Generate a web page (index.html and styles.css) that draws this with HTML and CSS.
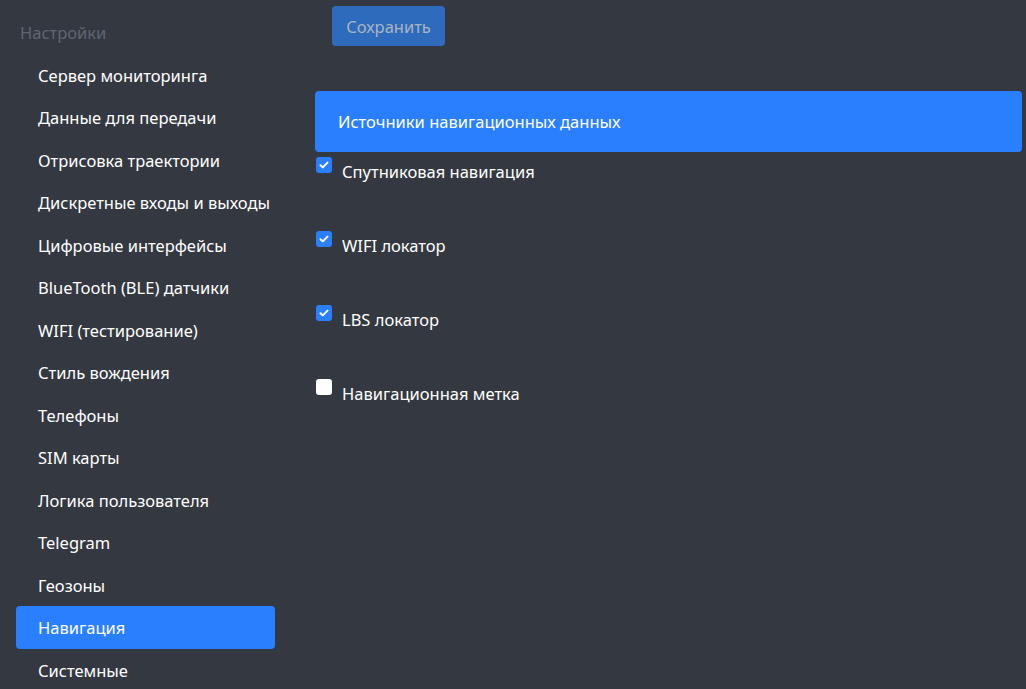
FILE: index.html
```html
<!DOCTYPE html>
<html lang="ru">
<head>
<meta charset="utf-8">
<title>Настройки</title>
<link rel="stylesheet" href="styles.css">
</head>
<body>
<div class="layout">
  <aside class="sidebar">
    <div class="sidebar-title">Настройки</div>
    <nav class="nav">
      <a class="nav-link">Сервер мониторинга</a>
      <a class="nav-link">Данные для передачи</a>
      <a class="nav-link">Отрисовка траектории</a>
      <a class="nav-link">Дискретные входы и выходы</a>
      <a class="nav-link">Цифровые интерфейсы</a>
      <a class="nav-link">BlueTooth (BLE) датчики</a>
      <a class="nav-link">WIFI (тестирование)</a>
      <a class="nav-link">Стиль вождения</a>
      <a class="nav-link">Телефоны</a>
      <a class="nav-link">SIM карты</a>
      <a class="nav-link">Логика пользователя</a>
      <a class="nav-link">Telegram</a>
      <a class="nav-link">Геозоны</a>
      <a class="nav-link active">Навигация</a>
      <a class="nav-link">Системные</a>
    </nav>
  </aside>
  <main class="main">
    <button class="btn-save" disabled>Сохранить</button>
    <div class="card-header">Источники навигационных данных</div>
    <div class="check-row">
      <span class="check checked"><svg viewBox="0 0 16 16" width="16" height="16"><path d="M4.5 8.2l2.3 2.2 4.7-4.8" fill="none" stroke="#fff" stroke-width="2" stroke-linecap="round" stroke-linejoin="round"/></svg></span>
      <span class="check-label">Спутниковая навигация</span>
    </div>
    <div class="check-row">
      <span class="check checked"><svg viewBox="0 0 16 16" width="16" height="16"><path d="M4.5 8.2l2.3 2.2 4.7-4.8" fill="none" stroke="#fff" stroke-width="2" stroke-linecap="round" stroke-linejoin="round"/></svg></span>
      <span class="check-label">WIFI локатор</span>
    </div>
    <div class="check-row">
      <span class="check checked"><svg viewBox="0 0 16 16" width="16" height="16"><path d="M4.5 8.2l2.3 2.2 4.7-4.8" fill="none" stroke="#fff" stroke-width="2" stroke-linecap="round" stroke-linejoin="round"/></svg></span>
      <span class="check-label">LBS локатор</span>
    </div>
    <div class="check-row">
      <span class="check"></span>
      <span class="check-label">Навигационная метка</span>
    </div>
  </main>
</div>
</body>
</html>
```

FILE: styles.css
```css
html, body {
  margin: 0;
  padding: 0;
  height: 100%;
  background: #343840;
}
body {
  font-family: "Noto Sans", "Open Sans", sans-serif;
  font-size: 16.5px;
  color: #ffffff;
  overflow: hidden;
}
.layout {
  display: flex;
  height: 689px;
}
.sidebar {
  width: 315px;
  flex: none;
  padding-top: 20px;
  box-sizing: border-box;
}
.sidebar-title {
  padding-left: 20px;
  line-height: 26px;
  height: 26px;
  color: #5e6770;
  margin-bottom: 7.5px;
}
.nav {
  display: flex;
  flex-direction: column;
  padding-left: 16px;
  width: 259px;
  box-sizing: content-box;
}
.nav-link {
  display: block;
  height: 42.5px;
  line-height: 44px;
  padding-left: 22px;
  color: #ffffff;
  border-radius: 4px;
  white-space: nowrap;
  overflow: hidden;
}
.nav-link.active {
  background: #2a7fff;
}
.main {
  flex: 1;
  padding-right: 4px;
}
.btn-save {
  display: block;
  margin: 6px 0 0 17px;
  width: 113px;
  height: 40px;
  background: #2e6bbd;
  color: #a9b4c2;
  border: none;
  border-radius: 4px;
  font-family: inherit;
  font-size: 16.5px;
  padding: 0;
}
.card-header {
  margin-top: 45px;
  height: 61px;
  line-height: 62px;
  padding-left: 23px;
  background: #2a7fff;
  border-radius: 4px;
  color: #ffffff;
}
.check-row {
  display: flex;
  align-items: flex-start;
  gap: 10px;
  padding-left: 1px;
  margin-top: 5px;
  height: 69px;
}
.check {
  width: 16px;
  height: 16px;
  border-radius: 3px;
  background: #ffffff;
  flex: none;
  display: flex;
}
.check.checked {
  background: #2a7fff;
}
.check-label {
  margin-top: 2px;
  line-height: 25px;
}
```
